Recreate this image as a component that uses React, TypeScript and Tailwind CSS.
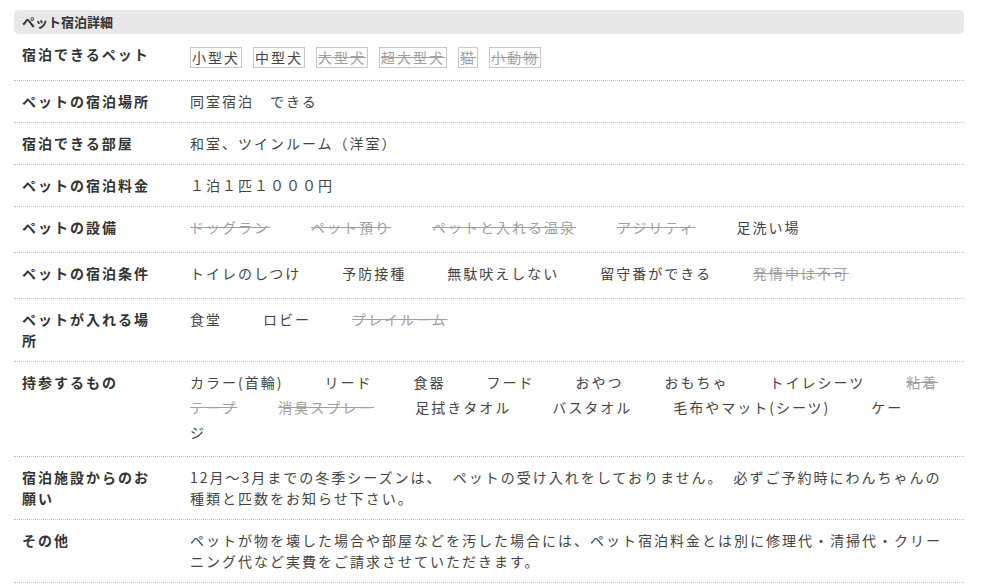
type Item = { t: string; off?: boolean }

type Row = {
  label: string
  kind: 'tags' | 'items' | 'text'
  items?: Item[]
  text?: string
  valueClass?: string
}

const rows: Row[] = [
  {
    label: '宿泊できるペット',
    kind: 'tags',
    items: [
      { t: '小型犬' },
      { t: '中型犬' },
      { t: '大型犬', off: true },
      { t: '超大型犬', off: true },
      { t: '猫', off: true },
      { t: '小動物', off: true },
    ],
  },
  { label: 'ペットの宿泊場所', kind: 'text', text: '同室宿泊　できる' },
  { label: '宿泊できる部屋', kind: 'text', text: '和室、ツインルーム（洋室）' },
  { label: 'ペットの宿泊料金', kind: 'text', text: '１泊１匹１０００円' },
  {
    label: 'ペットの設備',
    kind: 'items',
    valueClass: 'pt-[10px] pb-[14px] leading-[21px]',
    items: [
      { t: 'ドッグラン', off: true },
      { t: 'ペット預り', off: true },
      { t: 'ペットと入れる温泉', off: true },
      { t: 'アジリティ', off: true },
      { t: '足洗い場' },
    ],
  },
  {
    label: 'ペットの宿泊条件',
    kind: 'items',
    valueClass: 'pt-[10px] pb-[14px] leading-[21px]',
    items: [
      { t: 'トイレのしつけ' },
      { t: '予防接種' },
      { t: '無駄吠えしない' },
      { t: '留守番ができる' },
      { t: '発情中は不可', off: true },
    ],
  },
  {
    label: 'ペットが入れる場所',
    kind: 'items',
    items: [{ t: '食堂' }, { t: 'ロビー' }, { t: 'プレイルーム', off: true }],
  },
  {
    label: '持参するもの',
    kind: 'items',
    valueClass: 'pt-[8px] pb-[11px] leading-[25px]',
    items: [
      { t: 'カラー(首輪)' },
      { t: 'リード' },
      { t: '食器' },
      { t: 'フード' },
      { t: 'おやつ' },
      { t: 'おもちゃ' },
      { t: 'トイレシーツ' },
      { t: '粘着テープ', off: true },
      { t: '消臭スプレー', off: true },
      { t: '足拭きタオル' },
      { t: 'バスタオル' },
      { t: '毛布やマット(シーツ)' },
      { t: 'ケージ' },
    ],
  },
  {
    label: '宿泊施設からのお願い',
    kind: 'text',
    text: '12月～3月までの冬季シーズンは、 ペットの受け入れをしておりません。 必ずご予約時にわんちゃんの種類と匹数をお知らせ下さい。',
  },
  {
    label: 'その他',
    kind: 'text',
    text: 'ペットが物を壊した場合や部屋などを汚した場合には、ペット宿泊料金とは別に修理代・清掃代・クリーニング代など実費をご請求させていただきます。',
  },
]

function Value({ row }: { row: Row }) {
  if (row.kind === 'tags') {
    return (
      <div className="flex-1 pt-[13px] pb-[12px] pr-[12px] flex">
        {row.items!.map((it) => (
          <span
            key={it.t}
            className={
              'inline-block h-[21px] leading-[19px] px-[1px] border border-[#c8c8c8] mr-[11px] ' +
              (it.off ? 'text-[#a0a0a0] line-through' : 'text-[#444]')
            }
          >
            {it.t}
          </span>
        ))}
      </div>
    )
  }

  if (row.kind === 'items') {
    return (
      <div className={'flex-1 pr-[12px] ' + (row.valueClass ?? 'py-[10px] leading-[21px]')}>
        {row.items!.map((it) => (
          <span
            key={it.t}
            className={'mr-[41px] ' + (it.off ? 'text-[#a0a0a0] line-through' : 'text-[#444]')}
          >
            {it.t}
          </span>
        ))}
      </div>
    )
  }

  return (
    <div className="flex-1 py-[10px] pr-[12px] leading-[21px] text-[#444] [word-spacing:5px]">{row.text}</div>
  )
}

export default function App() {
  return (
    <div className="min-h-[586px] bg-white font-['Noto_Sans_CJK_JP','Noto_Sans',sans-serif]">
      <div className="ml-[14px] w-[950px] pt-[10px]">
        <h2 className="h-[24px] rounded-[5px] bg-[#e8e8e8] pl-[8px] text-[13px] leading-[24px] font-bold text-[#333]">
          ペット宿泊詳細
        </h2>

        {rows.map((row) => (
          <div key={row.label} className="flex border-b border-dotted border-[#bdbdbd] text-[14px] tracking-[2px]">
            <div className="w-[176px] shrink-0 pl-[8px] pr-[36px] py-[10px] leading-[21px] font-bold text-[#333]">
              {row.label}
            </div>
            <Value row={row} />
          </div>
        ))}
      </div>
    </div>
  )
}
